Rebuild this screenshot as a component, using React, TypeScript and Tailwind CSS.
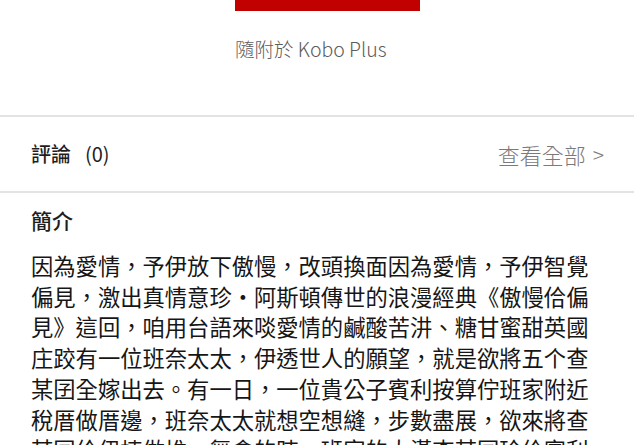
const intro =
  "因為愛情，予伊放下傲慢，改頭換面因為愛情，予伊智覺偏見，激出真情意珍・阿斯頓傳世的浪漫經典《傲慢佮偏見》這回，咱用台語來啖愛情的鹹酸苦汫、糖甘蜜甜英國庄跤有一位班奈太太，伊透世人的願望，就是欲將五个查某囝全嫁出去。有一日，一位貴公子賓利按算佇班家附近稅厝做厝邊，班奈太太就想空想縫，步數盡展，欲來將查某囝佮伊揀做堆，舞會的時，班家的大漢查某囝珍佮賓利";

export default function App() {
  return (
    <div
      lang="zh-TW"
      className="w-[634px] h-[445px] overflow-hidden bg-white"
      style={{ fontFamily: '"Noto Sans CJK TC", "Noto Sans", sans-serif' }}
    >
      {/* Top: buy button edge + Kobo Plus note */}
      <div className="h-[115px] flex flex-col items-start pl-[235px]">
        <div className="w-[185px] h-[11px] bg-[#c10000]" />
        <p className="mt-[26px] text-[19.5px] leading-[24px] font-light text-[#5c5c5c]">
          隨附於 Kobo Plus
        </p>
      </div>

      <div className="h-[2px] bg-[#e3e3e3]" />

      {/* Reviews row */}
      <div className="h-[74px] flex items-center justify-between pl-[31px] pr-[30px]">
        <div className="flex items-center gap-[14px] text-[20px] leading-[28px] text-[#1e1e1e]">
          <span className="font-medium">評論</span>
          <span>(0)</span>
        </div>
        <span className="flex items-center gap-[7px] text-[22px] leading-[28px] font-light text-[#7a7a7a]">
          <span>查看全部</span>
          <span className="text-[21px]">&gt;</span>
        </span>
      </div>

      <div className="h-[2px] bg-[#e3e3e3]" />

      {/* Synopsis */}
      <div className="pl-[31px] pr-[30px]">
        <h3 className="mt-[13px] text-[21px] leading-[28px] font-medium text-[#1e1e1e]">簡介</h3>
        <p className="mt-[16px] text-[22.3px] leading-[30.7px] text-[#161616]">{intro}</p>
      </div>
    </div>
  );
}
